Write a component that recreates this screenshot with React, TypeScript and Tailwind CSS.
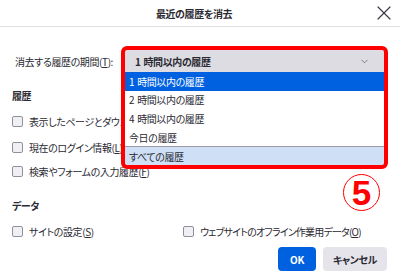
import { X, ChevronDown } from 'lucide-react';

const Check = ({ label, hint, tight }: { label: string; hint: string; tight?: boolean }) => (
  <div className="flex items-center h-[14px] gap-[6px]">
    <span className="w-[11px] h-[11px] rounded-[2px] border border-[#8f8f9d] bg-[#f0f0f4] shrink-0" />
    <span className={tight ? 'whitespace-nowrap tracking-[-0.8px]' : 'whitespace-nowrap'}>
      {label}(<span className="underline">{hint}</span>)
    </span>
  </div>
);

const options = [
  ['1', '時間以内の履歴'],
  ['2', '時間以内の履歴'],
  ['4', '時間以内の履歴'],
  ['', '今日の履歴'],
  ['', 'すべての履歴'],
];

export default function App() {
  return (
    <div className="relative w-[400px] h-[280px] overflow-hidden bg-white text-[10px] tracking-[-0.4px] text-[#2b2a33] font-['Noto_Sans_CJK_JP','Noto_Sans',sans-serif] [font-feature-settings:'palt']">
      {/* Header */}
      <div className="relative h-[27px] border-b border-[#e0e0e6] flex items-center justify-center">
        <span className="font-bold text-[10px] ml-[-12px]">最近の履歴を消去</span>
        <X className="absolute right-[4px] top-[1px] text-[#3a3944]" size={24} strokeWidth={1.2} />
      </div>

      <div className="pl-3 pr-[13px]">
        {/* Period row */}
        <div className="mt-[23px] flex items-center h-[22px]">
          <span className="ml-[3px] w-[110px] whitespace-nowrap">
            消去する履歴の期間(<span className="underline">T</span>):
          </span>
          <div className="relative w-[259px] h-[22px]">
            <div className="h-full bg-[#dcdce2] flex items-center justify-between pl-[10px] pr-[14px]">
              <span className="font-bold">
                <span className="mr-[3px]">1</span>時間以内の履歴
              </span>
              <ChevronDown size={11} strokeWidth={1.6} className="text-[#5b5b66]" />
            </div>
            {/* dropdown list */}
            <div className="absolute left-0 top-full w-full bg-white z-10">
              {options.map(([n, t], i) => (
                <div
                  key={n + t}
                  className={
                    i === 0
                      ? 'h-[18.6px] flex items-center pl-[4px] bg-[#0061e0] text-white'
                      : i === 4
                      ? 'h-[18.6px] flex items-center pl-[4px] bg-[#cfe0f6] border-t border-[#9a9aa6]'
                      : 'h-[18.6px] flex items-center pl-[4px]'
                  }
                >
                  {n && <span className="mr-[3px]">{n}</span>}
                  {t}
                </div>
              ))}
            </div>
            {/* red annotation frame */}
            <div className="absolute left-[-4px] top-[-4px] w-[267px] h-[123px] border-4 border-[#ff0000] rounded-[6px] z-20 pointer-events-none" />
          </div>
        </div>

        {/* History */}
        <div className="mt-[17px] h-[14px] leading-[14px] font-bold">履歴</div>
        <div className="mt-[11px] w-[109px] overflow-hidden">
          <Check label="表示したページとダウンロードの履歴" hint="B" />
        </div>
        <div className="mt-[12px] w-[109px] overflow-hidden">
          <Check label="現在のログイン情報" hint="L" />
        </div>
        <div className="mt-[10px]">
          <Check label="検索やフォームの入力履歴" hint="F" />
        </div>

        {/* Data */}
        <div className="mt-[21px] h-[14px] leading-[14px] font-bold">データ</div>
        <div className="mt-[11px] flex">
          <div className="w-[171px]">
            <Check label="サイトの設定" hint="S" />
          </div>
          <Check label="ウェブサイトのオフライン作業用データ" hint="O" tight />
        </div>

        {/* Buttons */}
        <div className="mt-[9px] flex justify-end gap-[7px]">
          <button className="w-[38px] h-[24px] rounded-[4px] bg-[#0061e0] text-white font-bold">OK</button>
          <button className="w-[64px] h-[24px] rounded-[4px] bg-[#e4e4ea] font-bold">キャンセル</button>
        </div>
      </div>

      {/* circled number annotation */}
      <div className="absolute left-[343px] top-[174px] w-[37px] h-[37px] rounded-full border-[1.5px] border-[#ff0000] flex items-center justify-center">
        <span className="text-[35px] font-bold text-[#ff0000] leading-none tracking-normal font-['Liberation_Sans',Arial,sans-serif]">
          5
        </span>
      </div>
    </div>
  );
}
